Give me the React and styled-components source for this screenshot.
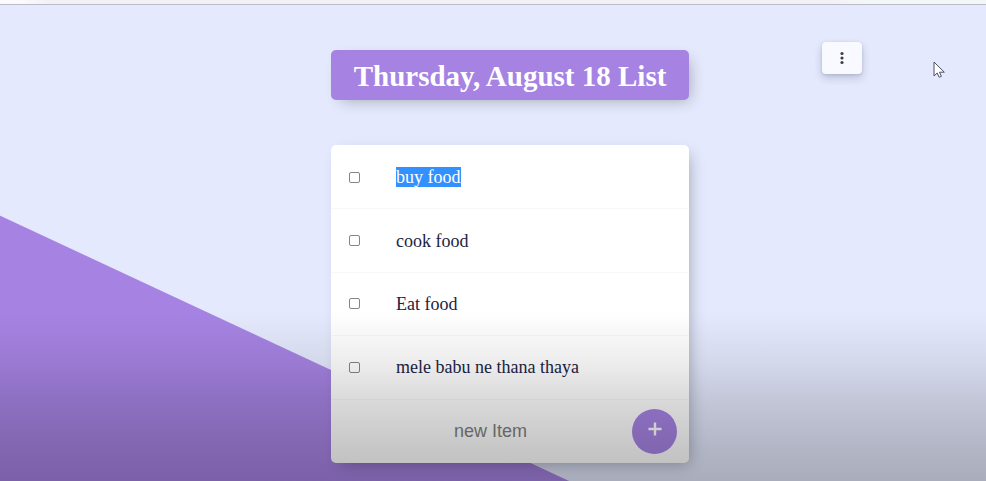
import React from "react";
import styled, { createGlobalStyle } from "styled-components";

const GlobalStyle = createGlobalStyle`
  * { box-sizing: border-box; }
  body { margin: 0; background: #e4e9fd; }
`;

const Page = styled.div`
  position: relative;
  display: flex;
  flex-direction: column;
  min-height: 100vh;
  font-family: "Liberation Serif", "Times New Roman", serif;
  color: #1b2444;
`;

const BrowserEdge = styled.div`
  height: 5px;
  background: linear-gradient(90deg, #fbfbfd 2%, #f2f1f6 5%, #f2f1f6 84%, #f3f7f7 88%);
  border-bottom: 1px solid #bcbacb;
`;

const Main = styled.main`
  flex: 1;
  display: grid;
  grid-template-columns: 1fr 358px 1fr;
  align-items: start;
  align-content: start;
  padding: 45px 0 18px 34px;
  background: linear-gradient(25deg, #a683e3 240px, #e4e9fd 241px);
`;

const Column = styled.div`
  grid-column: 2;
  display: grid;
  gap: 45px;
`;

const Banner = styled.header`
  display: flex;
  align-items: center;
  justify-content: center;
  height: 50px;
  padding-top: 2px;
  background: #a683e3;
  border-radius: 5px;
  box-shadow: 5px 5px 15px -5px rgba(0, 0, 0, 0.3);
`;

const Title = styled.h1`
  margin: 0;
  font-size: 29px;
  line-height: 32px;
  color: #fff;
  white-space: nowrap;
`;

const Card = styled.form`
  display: grid;
  grid-template-rows: 4fr 1fr;
  min-height: 318px;
  padding-top: 1px;
  background: #fff;
  border-radius: 5px;
  box-shadow: 5px 5px 15px -5px rgba(0, 0, 0, 0.3);
`;

const List = styled.ul`
  display: grid;
  grid-auto-rows: 1fr;
  margin: 0;
  padding: 0;
  list-style: none;
`;

const Item = styled.li`
  display: flex;
  align-items: center;
  padding: 0 18px;
  border-bottom: 1px solid #f7f7f7;
`;

const Check = styled.input`
  appearance: none;
  width: 11px;
  height: 11px;
  margin: 0 36px 0 0;
  background: #fff;
  border: 1px solid #858585;
  border-radius: 2px;

  &:checked { background: #a683e3; }
`;

const ItemLabel = styled.label`
  font-size: 18px;
  line-height: 20px;
  color: ${(p) => (p.$selected ? "#fff" : "inherit")};
  background: ${(p) => (p.$selected ? "#3390ff" : "transparent")};
`;

const AddRow = styled.div`
  display: flex;
  align-items: center;
  justify-content: space-between;
  padding: 0 12px 0 18px;
`;

const NewItem = styled.input`
  flex: 1;
  min-width: 0;
  height: 44px;
  padding: 0;
  border: 0;
  outline: 0;
  background: transparent;
  font: 18px "Liberation Sans", Arial, sans-serif;
  text-align: center;

  &::placeholder { color: #808080; opacity: 1; }
`;

const AddButton = styled.button`
  display: grid;
  place-items: center;
  width: 45px;
  height: 45px;
  padding: 0 0 4px;
  border: 0;
  border-radius: 50%;
  background: #a683e3;
`;

const MenuButton = styled.button`
  display: grid;
  place-items: center;
  width: 40px;
  height: 32px;
  margin: -8px 0 0 133px;
  padding: 0;
  border: 0;
  border-radius: 4px;
  background: #f8faff;
  box-shadow: 0 4px 8px rgba(40, 45, 80, 0.2), 0 1px 3px rgba(40, 45, 80, 0.15);
`;

const Shade = styled.div`
  position: absolute;
  inset: auto 0 0;
  height: 171px;
  pointer-events: none;
  background: linear-gradient(
    rgba(0, 0, 0, 0),
    rgba(0, 0, 0, 0.01) 6%,
    rgba(0, 0, 0, 0.08) 33%,
    rgba(0, 0, 0, 0.15) 53%,
    rgba(0, 0, 0, 0.22) 80%,
    rgba(0, 0, 0, 0.26)
  );
`;

const Pointer = styled.svg`
  position: absolute;
  top: 61px;
  right: 40px;
  pointer-events: none;
`;

const items = ["buy food", "cook food", "Eat food", "mele babu ne thana thaya"];

export default function App() {
  return (
    <Page>
      <GlobalStyle />
      <BrowserEdge />
      <Main>
        <Column>
          <Banner>
            <Title>Thursday, August 18 List</Title>
          </Banner>
          <Card onSubmit={(e) => e.preventDefault()}>
            <List>
              {items.map((text, i) => (
                <Item key={text}>
                  <Check type="checkbox" id={`item-${i}`} />
                  <ItemLabel htmlFor={`item-${i}`} $selected={i === 0}>
                    {text}
                  </ItemLabel>
                </Item>
              ))}
            </List>
            <AddRow>
              <NewItem type="text" placeholder="new Item" aria-label="new Item" />
              <AddButton type="submit" aria-label="Add">
                <svg width="14" height="14" viewBox="0 0 14 14" stroke="#fff" strokeWidth="2.4">
                  <path d="M7 0.5v13M0.5 7h13" />
                </svg>
              </AddButton>
            </AddRow>
          </Card>
        </Column>
        <MenuButton type="button" aria-label="Menu">
          <svg width="4" height="14" viewBox="0 0 4 14" fill="#3c4043">
            <circle cx="2" cy="2.5" r="1.6" />
            <circle cx="2" cy="7" r="1.6" />
            <circle cx="2" cy="11.5" r="1.6" />
          </svg>
        </MenuButton>
      </Main>
      <Shade />
      <Pointer width="13" height="18" viewBox="0 0 13 18">
        <path
          d="M1 1v14l3.2-3 2 4.3 2.2-1-1.9-4.1h4.8z"
          fill="#fff"
          stroke="#4b5068"
          strokeWidth="1"
          strokeLinejoin="round"
        />
      </Pointer>
    </Page>
  );
}
